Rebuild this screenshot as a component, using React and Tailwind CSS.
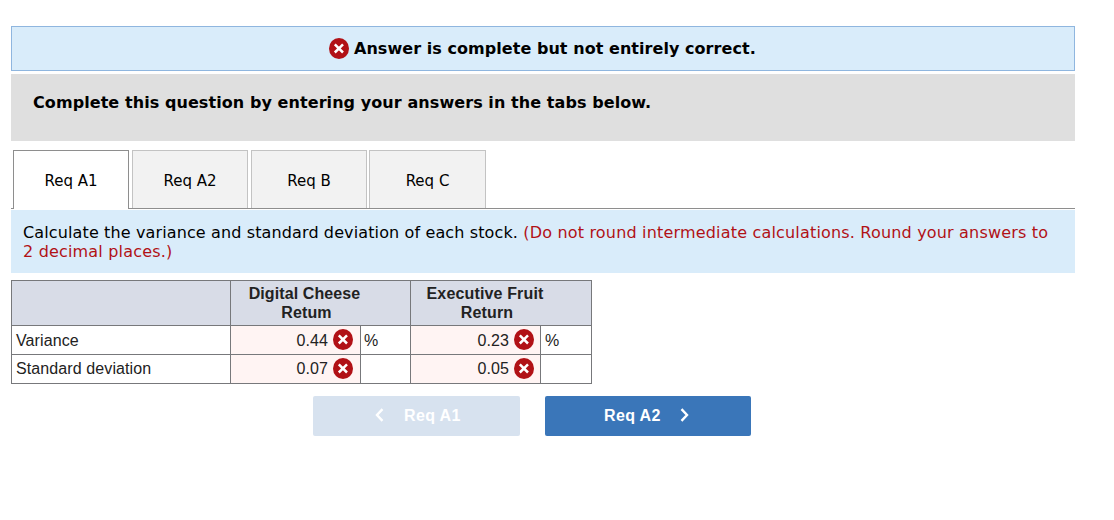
import clsx from 'clsx'

const tabs = [
    { label: 'Req A1', width: 'w-[116px] mr-[3px]', active: true },
    { label: 'Req A2', width: 'w-[116px] mr-[3px]' },
    { label: 'Req B', width: 'w-[116px] mr-[2px]' },
    { label: 'Req C', width: 'w-[117px]' },
]

const rows = [
    { label: 'Variance', values: ['0.44', '0.23'], unit: '%', pad: 'pt-[2px]' },
    { label: 'Standard deviation', values: ['0.07', '0.05'], unit: '', pad: 'pt-0' },
]

function WrongIcon({ className }) {
    return (
        <svg viewBox="0 0 20 21" className={clsx('w-5 h-[21px] shrink-0', className)}>
            <ellipse cx="10" cy="10.5" rx="10" ry="10.5" fill="#b11116" />
            <path d="M5.8 6.3l8.2 8.2M14 6.3l-8.2 8.2" stroke="#fff" strokeWidth="2.5" fill="none" />
        </svg>
    )
}

function Chevron({ left }) {
    return (
        <svg viewBox="0 0 9 14" className="w-[9px] h-[14px] shrink-0 -mt-[2px]">
            <path d={left ? 'M7.5 1.2L2 7l5.5 5.8' : 'M1.5 1.2L7 7l-5.5 5.8'} stroke="#fff" strokeWidth="2.4" fill="none" />
        </svg>
    )
}

function ValueCell({ value, pad, nudge }) {
    return (
        <div className={clsx('bg-[#fff4f3] flex items-center justify-end', nudge ? 'pr-[6px]' : 'pr-[7px]')}>
            <span className={clsx('mr-[5px] tracking-[0.1px]', pad)}>{value}</span>
            <WrongIcon className="-mt-px" />
        </div>
    )
}

export default function App() {
    return (
        <div className="w-[1114px] h-[520px] bg-white pt-[26px] pl-[11px] overflow-hidden font-['Verdana','DejaVu_Sans',sans-serif] text-black">
            <div className="w-[1064px]">
                <div className="h-[45px] border border-[#8fb6df] bg-[#d9ecfa] flex items-center pl-[317px]">
                    <WrongIcon />
                    <span className="ml-[5px] text-[16px] font-bold whitespace-nowrap tracking-[0.05px]">Answer is complete but not entirely correct.</span>
                </div>

                <div className="mt-[3px] h-[67px] bg-[#dfdfdf] pl-[22px] pt-[19px] text-[16px] leading-[20px] font-bold whitespace-nowrap tracking-[0.075px]">
                    <span>Complete this question by entering your answers in the tabs below.</span>
                </div>

                <div className="mt-[9px] h-[59px] flex border-b border-[#8e8e8e] pl-[2px]">
                    {tabs.map((tab) => (
                        <div
                            key={tab.label}
                            className={clsx(
                                'border border-b-0 flex items-center justify-center text-[15px] pt-[3px]',
                                tab.width,
                                tab.active ? 'h-[59px] bg-white border-[#8e8e8e]' : 'h-[58px] bg-[#f2f2f2] border-[#c3c3c3]'
                            )}
                        >
                            <span>{tab.label}</span>
                        </div>
                    ))}
                </div>

                <div className="mt-px h-[63px] bg-[#d9ecfa] pl-[12px] pt-[13px] text-[16px] leading-[19px] whitespace-nowrap tracking-[0.125px]">
                    <span>Calculate the variance and standard deviation of each stock. </span>
                    <span className="text-[#b11116] tracking-[0.18px]">(Do not round intermediate calculations. Round your answers to<br />2 decimal places.)</span>
                </div>

                <div className="font-['Liberation_Sans',Arial,sans-serif] text-[16px] text-[#222]">
                    <div className="mt-[7px] w-[581px] h-[104px] grid grid-cols-[218px_129px_49px_129px_50px] grid-rows-[44px_28px_28px] gap-px p-px bg-[#77787b]">
                        <div className="bg-[#d8dce7]" />
                        <div className="col-span-2 bg-[#d8dce7] font-bold text-center leading-[19px] pt-[3px] pr-[32px] tracking-[0.1px]">
                            Digital Cheese<br /><span className="ml-[4px]">Retum</span>
                        </div>
                        <div className="col-span-2 bg-[#d8dce7] font-bold text-center leading-[19px] pt-[3px] pr-[32px] tracking-[0.15px]">
                            Executive Fruit<br /><span className="ml-[4px]">Return</span>
                        </div>
                        {rows.map((row) => (
                            <div key={row.label} className="contents">
                                <div className={clsx('bg-white flex items-center pl-[4px] tracking-[0.1px]', row.pad)}>{row.label}</div>
                                <ValueCell value={row.values[0]} pad={row.pad} />
                                <div className={clsx('bg-white flex items-center pl-[3px]', row.pad)}>{row.unit}</div>
                                <ValueCell value={row.values[1]} pad={row.pad} nudge />
                                <div className={clsx('bg-white flex items-center pl-[4px]', row.pad)}>{row.unit}</div>
                            </div>
                        ))}
                    </div>

                    <div className="mt-[12px] ml-[302px] flex gap-[25px] text-white font-bold">
                        <button className="w-[207px] h-10 rounded-[2px] bg-[#d7e2ef] flex items-center pl-[62px]">
                            <Chevron left />
                            <span className="ml-[20px] tracking-[0.35px]">Req A1</span>
                        </button>
                        <button className="w-[206px] h-10 rounded-[2px] bg-[#3a76b9] flex items-center pl-[59px]">
                            <span className="mr-[19px] tracking-[0.35px]">Req A2</span>
                            <Chevron />
                        </button>
                    </div>
                </div>
            </div>
        </div>
    )
}
